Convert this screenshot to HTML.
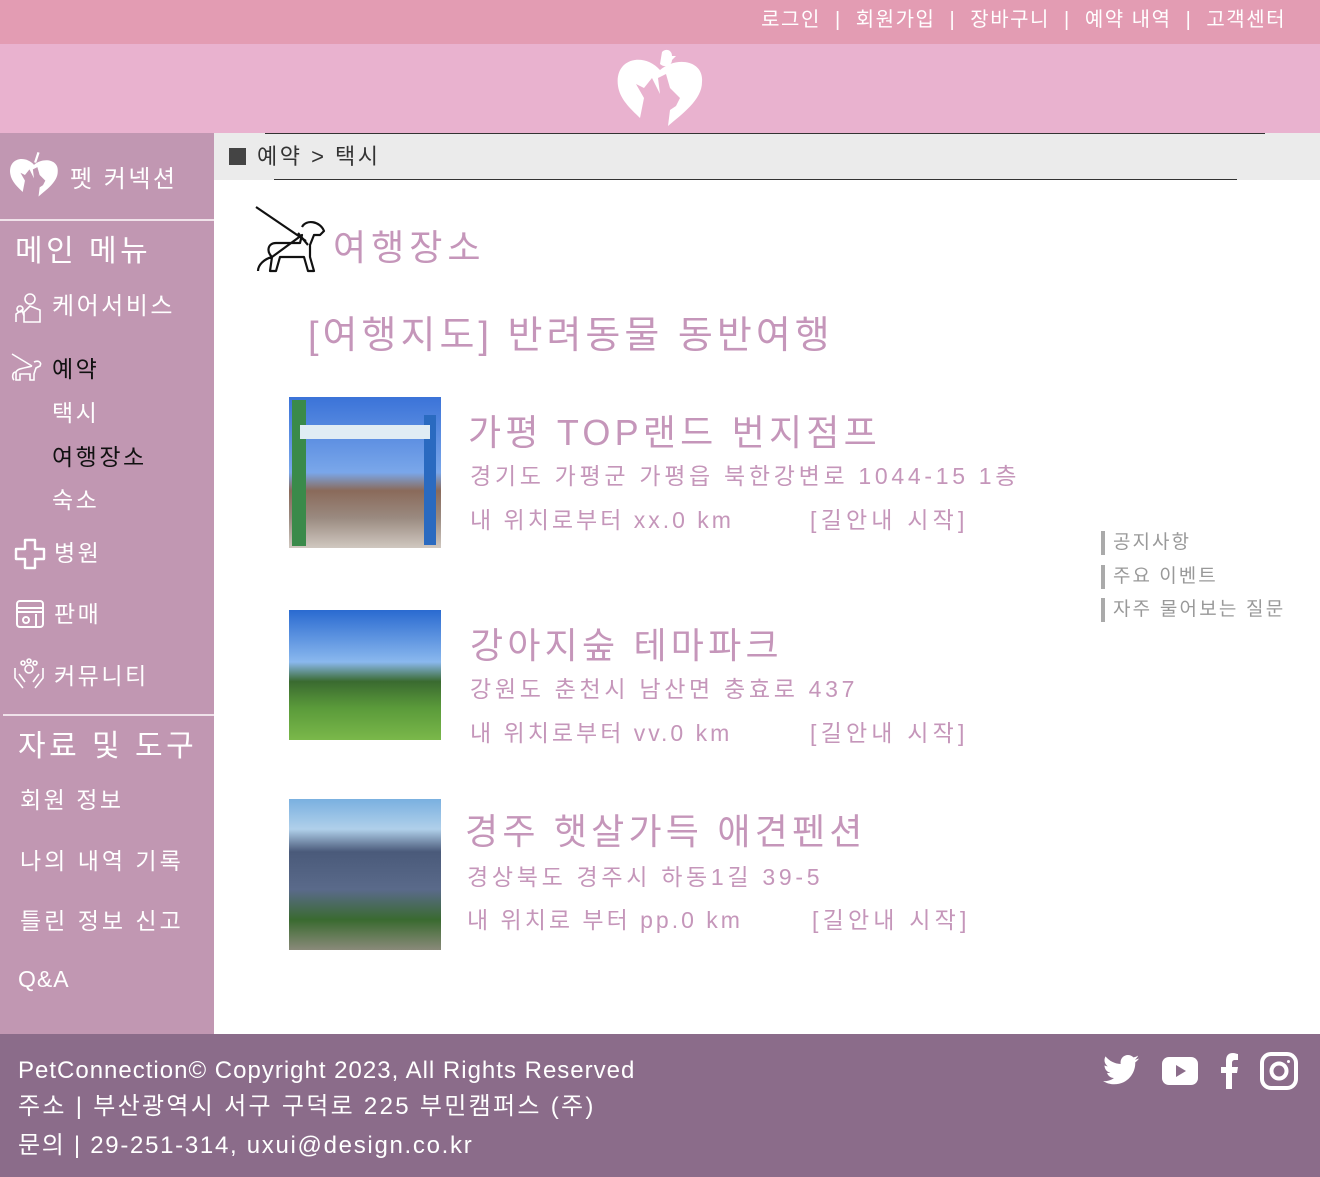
<!DOCTYPE html>
<html><head><meta charset="utf-8"><style>
*{margin:0;padding:0;box-sizing:border-box}
body{width:1320px;height:1177px;position:relative;font-family:"Liberation Sans","Noto Sans CJK KR",sans-serif;background:#fff;overflow:hidden}
.a{position:absolute;white-space:nowrap;line-height:1}
.w{color:#fff}
.p{color:#c596ba}
.t{font-size:36px;letter-spacing:4.2px}
.ad{font-size:23px;letter-spacing:3.7px}
.ds{font-size:23px;letter-spacing:3px}
.gd{font-size:23px;letter-spacing:4.2px}
</style></head><body>
<div class="a" style="left:0;top:0;width:1320px;height:44px;background:#e39cb3"></div>
<div class="a w" style="right:34px;top:10px;font-size:20px;letter-spacing:1.5px">로그인 &nbsp;|&nbsp; 회원가입 &nbsp;|&nbsp; 장바구니 &nbsp;|&nbsp; 예약 내역 &nbsp;|&nbsp; 고객센터</div>
<div class="a" style="left:0;top:44px;width:1320px;height:89px;background:#e9b2cf"></div>
<svg class="a" style="left:614px;top:48px" width="92" height="80" viewBox="0 0 92 80"><path d="M46 22 C30 4 0 10 4 38 C6 52 18 62 26 70 L30 50 L22 36 L30 40 L38 30 L46 46 L44 30 L52 26 L56 40 L66 50 L62 58 L56 62 L54 78 C68 66 88 52 88 34 C90 12 62 8 46 22Z" fill="#fff"/><path d="M48 4 C52 0 58 2 58 8 L62 8 L58 12 C58 18 50 20 46 16 Z" fill="#fff"/></svg>

<div class="a" style="left:0;top:133px;width:214px;height:901px;background:#c197b2"></div>
<svg class="a" style="left:8px;top:152px" width="52" height="46" viewBox="0 0 92 80"><path d="M46 22 C30 4 0 10 4 38 C6 52 18 62 26 70 L30 50 L22 36 L30 40 L38 30 L46 46 L44 30 L52 26 L56 40 L66 50 L62 58 L56 62 L54 78 C68 66 88 52 88 34 C90 12 62 8 46 22Z" fill="#fff"/><path d="M48 18 L54 0" stroke="#fff" stroke-width="4"/></svg>
<div class="a w" style="left:70px;top:168px;font-size:24px;letter-spacing:2.5px">펫 커넥션</div>
<div class="a" style="left:0;top:219px;width:214px;height:2px;background:#f0e2ea"></div>
<div class="a w" style="left:15px;top:237px;font-size:30px;letter-spacing:3.5px">메인 메뉴</div>
<svg class="a" style="left:12px;top:292px" width="32" height="32" viewBox="0 0 32 32" fill="none" stroke="#fff" stroke-width="1.6"><circle cx="18" cy="7" r="5"/><path d="M12 30 V20 L18 14 L28 18 V30 Z M4 30 L4 22 L10 18 L12 24"/><circle cx="8" cy="17" r="3"/></svg>
<div class="a w" style="left:52px;top:295px;font-size:24px;letter-spacing:2.5px">케어서비스</div>
<svg class="a" style="left:10px;top:352px" width="34" height="30" viewBox="0 0 34 30" fill="none" stroke="#fff" stroke-width="1.6"><path d="M2 2 L22 14"/><path d="M24 10 C28 8 32 10 30 14 L26 16 L24 22 V28 H20 V22 H10 V28 H6 V20 C2 20 2 26 4 28 M6 20 C8 16 16 16 22 14"/></svg>
<div class="a" style="left:52px;top:358px;font-size:23px;color:#111;letter-spacing:2.5px">예약</div>
<div class="a w" style="left:52px;top:402px;font-size:23px;letter-spacing:2.5px">택시</div>
<div class="a" style="left:52px;top:446px;font-size:23px;color:#111;letter-spacing:2.5px">여행장소</div>
<div class="a w" style="left:52px;top:489px;font-size:23px;letter-spacing:2.5px">숙소</div>
<svg class="a" style="left:14px;top:538px" width="32" height="32" viewBox="0 0 32 32" fill="none" stroke="#fff" stroke-width="2.4"><path d="M11 2 H21 V11 H30 V21 H21 V30 H11 V21 H2 V11 H11 Z" stroke-linejoin="round"/></svg>
<div class="a w" style="left:54px;top:542px;font-size:23px;letter-spacing:2.5px">병원</div>
<svg class="a" style="left:14px;top:598px" width="32" height="32" viewBox="0 0 32 32" fill="none" stroke="#fff" stroke-width="2"><rect x="3" y="3" width="26" height="26" rx="3"/><path d="M3 10 H29 M3 14 H29 M22 16 V29"/><circle cx="12" cy="22" r="3"/></svg>
<div class="a w" style="left:54px;top:603px;font-size:23px;letter-spacing:2.5px">판매</div>
<svg class="a" style="left:13px;top:658px" width="32" height="32" viewBox="0 0 32 32" fill="none" stroke="#fff" stroke-width="1.6"><circle cx="16" cy="11" r="4"/><circle cx="10" cy="5" r="2"/><circle cx="16" cy="3" r="2"/><circle cx="22" cy="5" r="2"/><path d="M2 10 V20 L10 30 M30 10 V20 L22 30 M6 16 L12 24 M26 16 L20 24"/></svg>
<div class="a w" style="left:54px;top:665px;font-size:23px;letter-spacing:2.5px">커뮤니티</div>
<div class="a" style="left:3px;top:714px;width:211px;height:2px;background:#f0e2ea"></div>
<div class="a w" style="left:18px;top:732px;font-size:30px;letter-spacing:3.5px">자료 및 도구</div>
<div class="a w" style="left:20px;top:789px;font-size:23px;letter-spacing:2.5px">회원 정보</div>
<div class="a w" style="left:20px;top:850px;font-size:23px;letter-spacing:3px">나의 내역 기록</div>
<div class="a w" style="left:20px;top:910px;font-size:23px;letter-spacing:3px">틀린 정보 신고</div>
<div class="a w" style="left:18px;top:968px;font-size:23px;letter-spacing:1px">Q&amp;A</div>

<div class="a" style="left:214px;top:133px;width:1106px;height:47px;background:#ebebeb"></div>
<div class="a" style="left:265px;top:133px;width:1000px;height:1px;background:#333"></div>
<div class="a" style="left:274px;top:179px;width:963px;height:1px;background:#333"></div>
<div class="a" style="left:229px;top:148px;width:17px;height:17px;background:#444"></div>
<div class="a" style="left:257px;top:146px;font-size:22px;color:#333;letter-spacing:2.5px">예약 &gt; 택시</div>

<svg class="a" style="left:254px;top:205px" width="74" height="70" viewBox="0 0 74 70" fill="none" stroke="#111" stroke-width="2.2" stroke-linejoin="round"><path d="M2 2 L52 36"/><path d="M48 22 C52 14 66 16 70 26 L66 30 L60 30 L56 40 L56 52 L60 66 H54 L50 52 H26 L22 66 H16 L18 52 C10 54 4 60 4 66 M18 52 C12 46 14 38 22 38 L46 38 L48 30 Z"/><path d="M44 28 L54 40"/></svg>
<div class="a p" style="left:333px;top:230px;font-size:36px;letter-spacing:5px">여행장소</div>
<div class="a p" style="left:308px;top:317px;font-size:38px;letter-spacing:4px">[여행지도] 반려동물 동반여행</div>

<div class="a" style="left:289px;top:397px;width:152px;height:151px;background:linear-gradient(#3b73d8 0%,#7aa7ea 50%,#8a6a5a 62%,#9a8a80 80%,#d0c8c0 100%)"></div>
<div class="a" style="left:292px;top:400px;width:14px;height:146px;background:#3a8a4a"></div>
<div class="a" style="left:424px;top:415px;width:12px;height:130px;background:#2a6ac0"></div>
<div class="a" style="left:300px;top:425px;width:130px;height:14px;background:#e0ecf4"></div>
<div class="a p t" style="left:468px;top:415px">가평 TOP랜드 번지점프</div>
<div class="a p ad" style="left:470px;top:465px">경기도 가평군 가평읍 북한강변로 1044-15 1층</div>
<div class="a p ds" style="left:470px;top:509px">내 위치로부터 xx.0 km</div>
<div class="a p gd" style="left:810px;top:509px">[길안내 시작]</div>

<div class="a" style="left:289px;top:610px;width:152px;height:130px;background:linear-gradient(#2a6ad0 0%,#8ab8ee 40%,#3a6a30 55%,#5a9a3a 75%,#7ab84a 100%)"></div>
<div class="a p t" style="left:470px;top:628px">강아지숲 테마파크</div>
<div class="a p ad" style="left:470px;top:678px">강원도 춘천시 남산면 충효로 437</div>
<div class="a p ds" style="left:470px;top:722px">내 위치로부터 vv.0 km</div>
<div class="a p gd" style="left:810px;top:722px">[길안내 시작]</div>

<div class="a" style="left:289px;top:799px;width:152px;height:151px;background:linear-gradient(#7ab0e0 0%,#b0d0ea 20%,#4a5a7a 35%,#5a6a8a 60%,#3a6a30 80%,#8a8a7a 100%)"></div>
<div class="a p t" style="left:465px;top:814px">경주 햇살가득 애견펜션</div>
<div class="a p ad" style="left:467px;top:866px">경상북도 경주시 하동1길 39-5</div>
<div class="a p ds" style="left:467px;top:909px">내 위치로 부터 pp.0 km</div>
<div class="a p gd" style="left:812px;top:909px">[길안내 시작]</div>

<div class="a" style="left:1101px;top:531px;width:4px;height:24px;background:#aaa"></div>
<div class="a" style="left:1101px;top:565px;width:4px;height:24px;background:#aaa"></div>
<div class="a" style="left:1101px;top:598px;width:4px;height:24px;background:#aaa"></div>
<div class="a" style="left:1113px;top:533px;font-size:19px;color:#999;letter-spacing:2px">공지사항</div>
<div class="a" style="left:1113px;top:567px;font-size:19px;color:#999;letter-spacing:2px">주요 이벤트</div>
<div class="a" style="left:1113px;top:600px;font-size:19px;color:#999;letter-spacing:2.2px">자주 물어보는 질문</div>

<div class="a" style="left:0;top:1034px;width:1320px;height:143px;background:#8b6c8a"></div>
<div class="a w" style="left:18px;top:1059px;font-size:24px;letter-spacing:1px">PetConnection© Copyright 2023, All Rights Reserved</div>
<div class="a w" style="left:18px;top:1095px;font-size:24px;letter-spacing:2.3px">주소 | 부산광역시 서구 구덕로 225 부민캠퍼스 (주)</div>
<div class="a w" style="left:18px;top:1134px;font-size:24px;letter-spacing:1.7px">문의 | 29-251-314, uxui@design.co.kr</div>
<svg class="a" style="left:1103px;top:1055px" width="36" height="30" viewBox="0 0 24 20"><path fill="#fff" d="M24 2.3c-.9.4-1.8.7-2.8.8 1-.6 1.8-1.6 2.2-2.7-1 .6-2 1-3.1 1.2C19.3.6 18 0 16.6 0c-2.7 0-4.9 2.2-4.9 4.9 0 .4 0 .8.1 1.1C7.7 5.8 4.1 3.9 1.7.9c-.4.7-.7 1.600-.7 2.5 0 1.7.9 3.2 2.2 4.1-.8 0-1.6-.2-2.2-.6v.1c0 2.4 1.7 4.4 3.900 4.8-.4.1-.8.2-1.3.2-.3 0-.6 0-.9-.1.6 2 2.4 3.4 4.6 3.4-1.7 1.3-3.8 2.1-6.1 2.1-.4 0-.8 0-1.2-.1 2.2 1.4 4.8 2.2 7.5 2.2 9.1 0 14-7.5 14-14v-.6c1-.7 1.8-1.6 2.5-2.6z"/></svg>
<svg class="a" style="left:1162px;top:1057px" width="36" height="28" viewBox="0 0 36 28"><rect width="36" height="28" rx="7" fill="#fff"/><path d="M14 8 L24 14 L14 20Z" fill="#8b6c8a"/></svg>
<svg class="a" style="left:1219px;top:1053px" width="20" height="36" viewBox="0 0 20 36"><path fill="#fff" d="M13 36V20h5l1-6h-6v-4c0-2 1-3 3-3h3V1C18 1 16 0 14 0 9 0 7 3 7 8v6H2v6h5v16z"/></svg>
<svg class="a" style="left:1260px;top:1052px" width="38" height="38" viewBox="0 0 38 38" fill="none" stroke="#fff" stroke-width="4"><rect x="2" y="2" width="34" height="34" rx="9"/><circle cx="19" cy="19" r="7.5"/><circle cx="28.5" cy="9.5" r="1.5" fill="#fff" stroke="none"/></svg>
</body></html>
